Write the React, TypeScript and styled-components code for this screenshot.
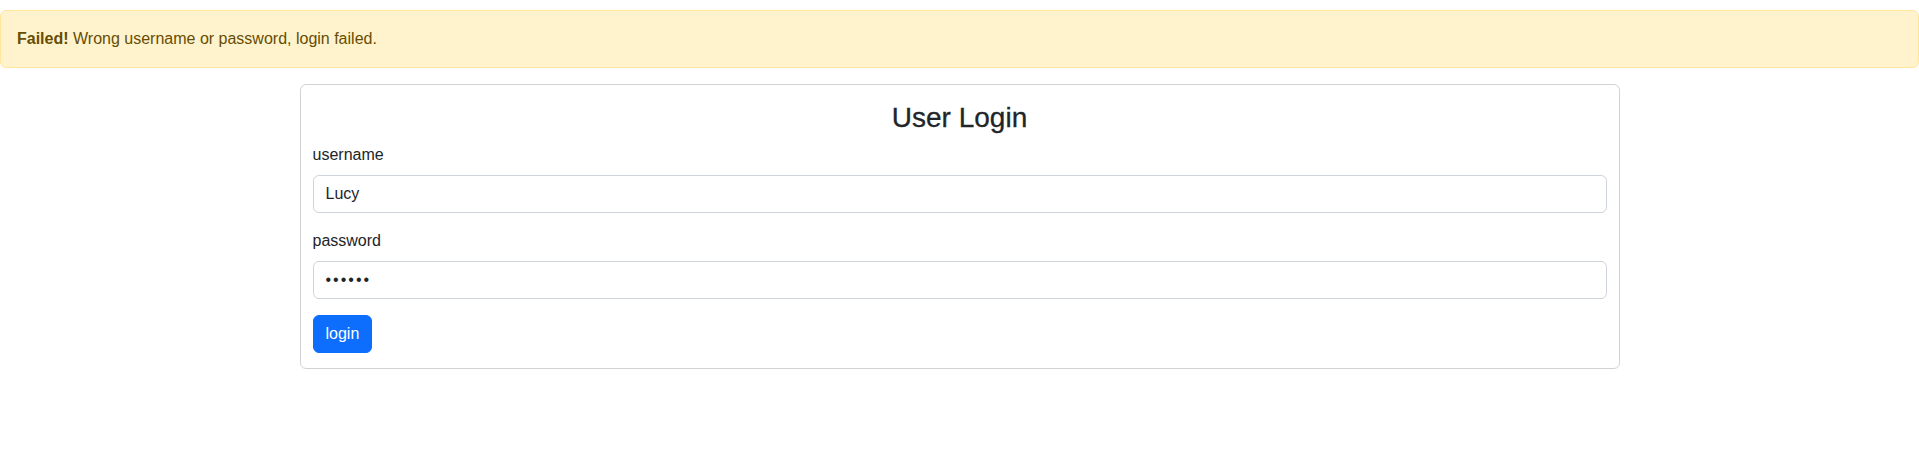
import React from "react";
import styled, { createGlobalStyle } from "styled-components";

const GlobalStyle = createGlobalStyle`
  * {
    box-sizing: border-box;
  }
  html, body {
    margin: 0;
    padding: 0;
    background: #fff;
  }
  body {
    font-family: "Liberation Sans", Arial, Helvetica, sans-serif;
    font-size: 16px;
    line-height: 1.5;
    color: #212529;
  }
`;

const Page = styled.div`
  padding-top: 10px;
`;

const Alert = styled.div`
  padding: 16px;
  margin-bottom: 16px;
  color: #664d03;
  background-color: #fff3cd;
  border: 1px solid #ffe69c;
  border-radius: 6px;

  strong {
    font-weight: 700;
  }
`;

const Card = styled.div`
  width: 1320px;
  margin: 0 auto;
  padding: 16px 12px 15px;
  border: 1px solid rgba(0, 0, 0, 0.175);
  border-radius: 6px;
`;

const Title = styled.h3`
  margin: 0 0 8px;
  font-size: 28px;
  font-weight: 500;
  line-height: 1.2;
  text-align: center;
  -webkit-text-stroke: 0.3px #212529;
`;

const Field = styled.div`
  margin-bottom: 16px;
`;

const Label = styled.label`
  display: block;
  margin-bottom: 8px;
`;

const Input = styled.input<{ $secret?: boolean }>`
  display: block;
  width: 100%;
  height: 38px;
  padding: 6px 12px;
  font-family: inherit;
  font-size: 16px;
  line-height: 1.5;
  letter-spacing: ${(p) => (p.$secret ? "2px" : "normal")};
  color: #212529;
  background: #fff;
  border: 1px solid #ced4da;
  border-radius: 6px;
  outline: none;
`;

const Button = styled.button`
  display: inline-block;
  padding: 6px 12px;
  font-family: inherit;
  font-size: 16px;
  line-height: 1.5;
  color: #fff;
  background-color: #0d6efd;
  border: 1px solid #0d6efd;
  border-radius: 6px;
  cursor: pointer;
`;

const App: React.FC = () => {
  return (
    <Page>
      <GlobalStyle />
      <Alert>
        <strong>Failed!</strong> Wrong username or password, login failed.
      </Alert>
      <Card>
        <Title>User Login</Title>
        <form onSubmit={(e) => e.preventDefault()}>
          <Field>
            <Label htmlFor="username">username</Label>
            <Input id="username" type="text" defaultValue="Lucy" />
          </Field>
          <Field>
            <Label htmlFor="password">password</Label>
            <Input id="password" type="password" defaultValue="123456" $secret />
          </Field>
          <Button type="submit">login</Button>
        </form>
      </Card>
    </Page>
  );
};

export default App;
